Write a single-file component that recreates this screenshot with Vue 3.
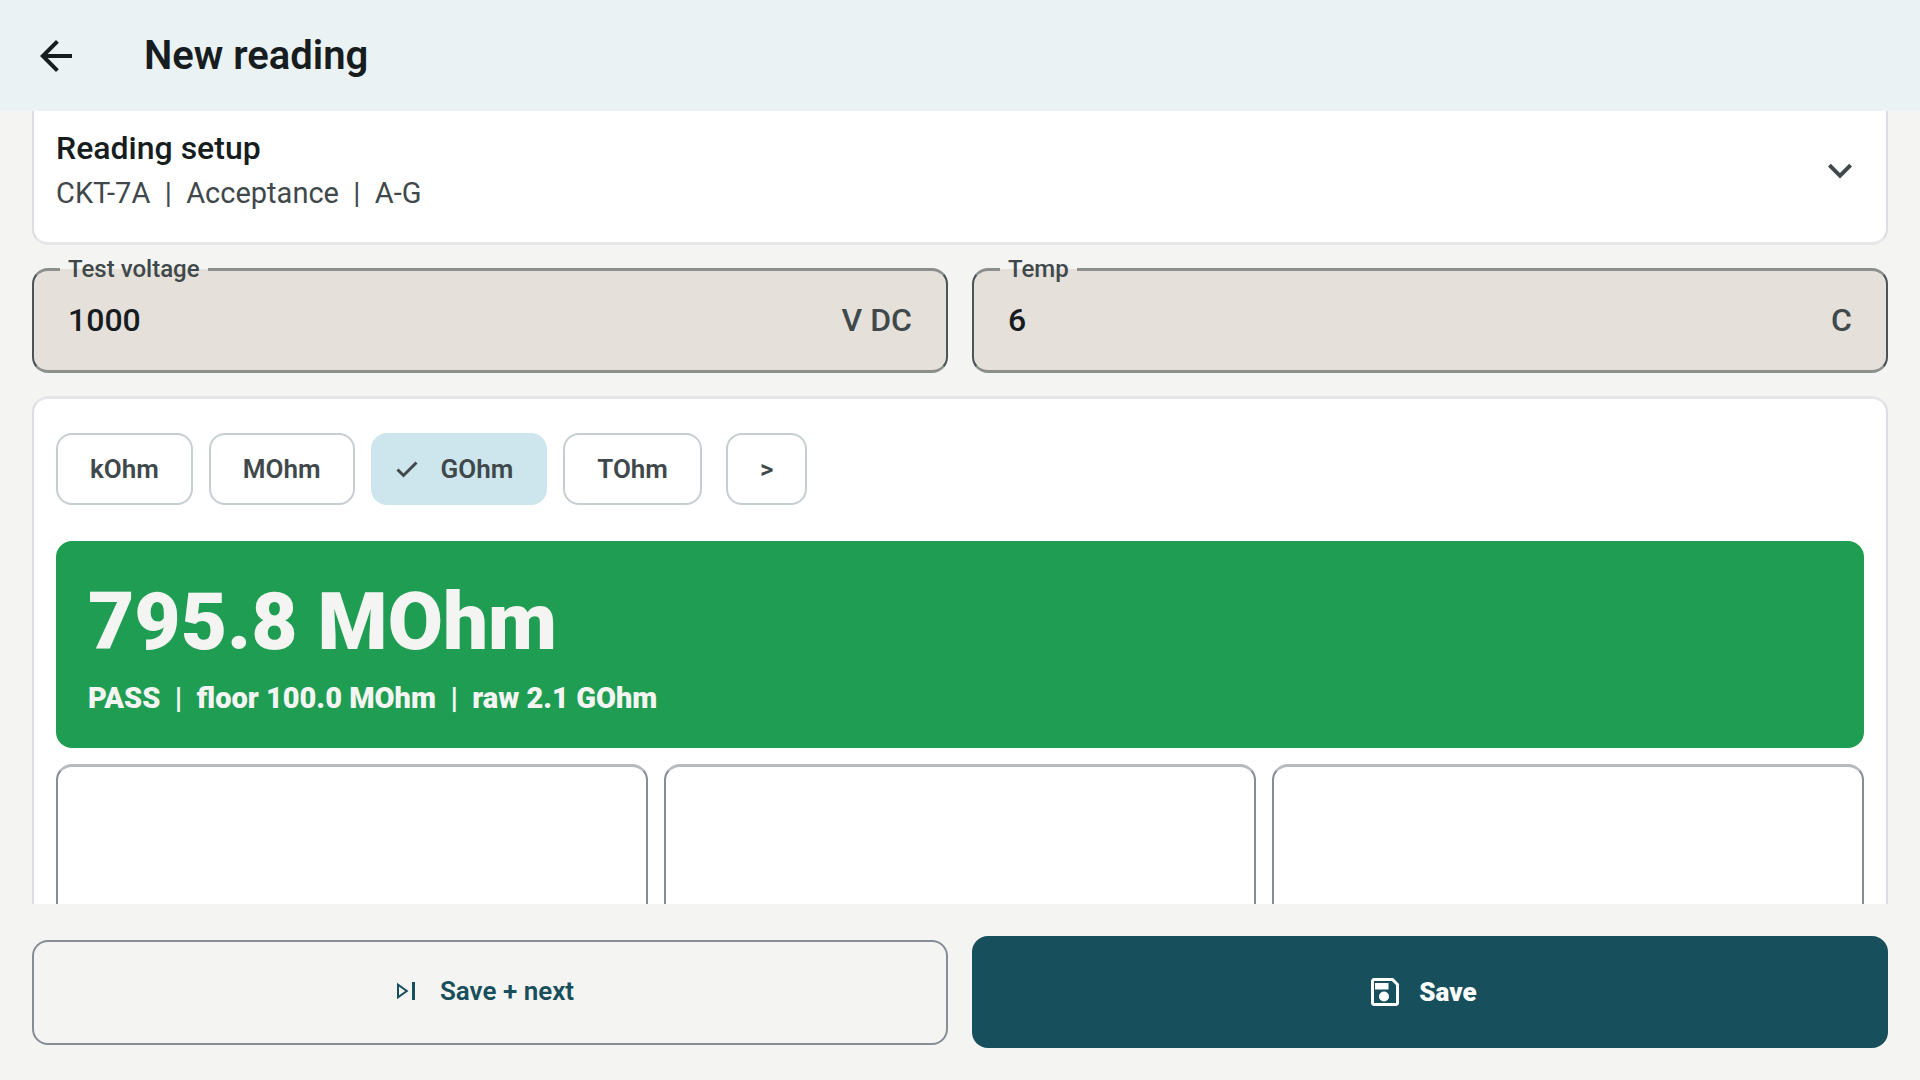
<script setup>
import { ref } from 'vue'

const voltage = ref('1000')
const temperature = ref('6')
const units = ['kOhm', 'MOhm', 'GOhm', 'TOhm']
const selectedUnit = ref('GOhm')
const keys = ['7', '8', '9']
</script>

<template>
  <div class="screen">
    <header class="app-bar">
      <button class="back" type="button" aria-label="Back">
        <svg class="icon" viewBox="0 0 24 24" aria-hidden="true">
          <path d="M20 11H7.83l5.59-5.59L12 4l-8 8 8 8 1.41-1.41L7.83 13H20z" />
        </svg>
      </button>
      <h1>New reading</h1>
    </header>

    <main class="content">
      <button class="setup" type="button" aria-expanded="false">
        <span class="setup-text">
          <span class="setup-title">Reading setup</span>
          <span class="setup-detail">CKT-7A &nbsp;|&nbsp; Acceptance &nbsp;|&nbsp; A-G</span>
        </span>
        <svg class="icon" viewBox="0 0 24 24" aria-hidden="true">
          <path d="M16.59 8.89 12 13.47 7.41 8.89 6 10.300l6 6 6-6z" />
        </svg>
      </button>

      <div class="fields">
        <div class="field">
          <label for="voltage">Test voltage</label>
          <input id="voltage" v-model="voltage" type="text" inputmode="numeric" />
          <span class="suffix">V DC</span>
        </div>
        <div class="field">
          <label for="temperature">Temp</label>
          <input id="temperature" v-model="temperature" type="text" inputmode="numeric" />
          <span class="suffix">C</span>
        </div>
      </div>

      <section class="entry">
        <div class="chips">
          <button
            v-for="unit in units"
            :key="unit"
            type="button"
            class="chip"
            :class="{ selected: unit === selectedUnit }"
            :aria-pressed="unit === selectedUnit"
            @click="selectedUnit = unit"
          >
            <svg v-if="unit === selectedUnit" class="check" viewBox="0 0 24 24" aria-hidden="true">
              <path d="m2.500 12.500 6 6L21.500 5.500" />
            </svg>
            {{ unit }}
          </button>
          <button type="button" class="chip more">&gt;</button>
        </div>

        <div class="result">
          <strong class="result-value">795.8 MOhm</strong>
          <span class="result-detail">PASS &nbsp;|&nbsp; floor 100.0 MOhm &nbsp;|&nbsp; raw 2.1 GOhm</span>
        </div>

        <div class="keypad">
          <button v-for="key in keys" :key="key" class="key" type="button" :aria-label="key"></button>
        </div>
      </section>
    </main>

    <footer class="actions">
      <button class="action outlined" type="button">
        <svg class="next-icon" viewBox="0 0 20 20" aria-hidden="true">
          <path class="triangle" d="M2 3.800v12.400L10.800 10z" />
          <path d="M17.500 1v18" />
        </svg>
        Save + next
      </button>
      <button class="action filled" type="button">
        <svg class="save-icon" viewBox="0 0 28 28" aria-hidden="true">
          <path d="M3 1.500h18.500l5 5V25a1.500 1.500 0 0 1-1.500 1.500H3A1.500 1.500 0 0 1 1.500 25V3A1.500 1.500 0 0 1 3 1.500z" />
          <rect x="4" y="5" width="13.500" height="6.500" />
          <circle cx="13" cy="18.500" r="5" />
        </svg>
        Save
      </button>
    </footer>
  </div>
</template>

<style>
body {
  margin: 0;
  background: #f4f4f2;
}
</style>

<style scoped>
.screen {
  display: flex;
  flex-direction: column;
  height: 100vh;
  background: #f4f4f2;
  color: #171c1f;
  font-family: Roboto, sans-serif;
}

.screen *,
.screen {
  box-sizing: border-box;
}

button,
input {
  margin: 0;
  font-family: inherit;
  color: inherit;
}

button {
  cursor: pointer;
}

.icon {
  display: block;
  flex: none;
  width: 48px;
  height: 48px;
  fill: currentColor;
}

.app-bar {
  display: flex;
  flex: none;
  align-items: center;
  gap: 64px;
  height: 111px;
  padding: 0 32px;
  background: #eaf2f4;
}

.back {
  padding: 0;
  border: 0;
  background: none;
}

h1 {
  margin: 0;
  font-size: 40px;
  font-weight: 600;
  line-height: 48px;
}

.content {
  display: flex;
  flex: 1;
  flex-direction: column;
  gap: 23px;
  min-height: 0;
  padding: 0 32px;
  overflow: hidden;
}

.setup {
  display: flex;
  flex: none;
  align-items: center;
  justify-content: space-between;
  padding: 14px 22px 27px;
  border: 2px solid #dcdee2;
  border-top: 0;
  border-bottom: 3px solid #e4e6e8;
  border-radius: 0 0 16px 16px;
  background: #fff;
  text-align: left;
}

.setup-text {
  display: flex;
  flex-direction: column;
}

.setup-title {
  font-size: 32px;
  font-weight: 500;
  line-height: 46px;
}

.setup-detail {
  font-size: 29px;
  line-height: 44px;
  color: #3f484b;
}

.setup .icon {
  color: #3f484b;
}

.fields,
.actions {
  display: grid;
  flex: none;
  grid-template-columns: 1fr 1fr;
  gap: 24px;
}

.field {
  position: relative;
  display: flex;
  align-items: center;
  height: 105px;
  padding: 0 34px 2px;
  border: 2px solid #4b5456;
  border-top: 3px solid #8b908d;
  border-bottom: 3px solid #8b908d;
  border-radius: 16px;
  background: #e5e0d9;
  font-size: 32px;
}

.field label {
  position: absolute;
  top: -18px;
  left: 26px;
  padding: 0 8px;
  background: linear-gradient(#f4f4f2 50%, #e5e0d9 50%);
  font-size: 24px;
  font-weight: 500;
  line-height: 32px;
  color: #3f484b;
}

.field input {
  flex: 1;
  min-width: 0;
  padding: 0;
  border: 0;
  outline: 0;
  background: none;
  font-size: 32px;
  font-weight: 500;
}

.suffix {
  font-weight: 500;
  color: #3f484b;
}

.entry {
  flex: none;
  padding: 34px 22px 24px;
  border: 2px solid #dcdee2;
  border-top: 3px solid #e4e6e8;
  border-radius: 16px;
  background: #fff;
}

.chips {
  display: flex;
  gap: 16px;
  margin-bottom: 36px;
}

.chip {
  display: flex;
  align-items: center;
  height: 72px;
  padding: 0 32px;
  border: 2px solid #c6ced1;
  border-radius: 16px;
  background: #fff;
  font-size: 26px;
  font-weight: 600;
  color: #3f484b;
}

.chip.selected {
  gap: 22px;
  padding: 0 32px 0 22px;
  border-color: #cde6ed;
  background: #cde6ed;
}

.chip.more {
  margin-left: 8px;
}

.check {
  width: 24px;
  height: 24px;
  fill: none;
  stroke: currentColor;
  stroke-width: 3;
}

.result {
  display: flex;
  flex-direction: column;
  gap: 4px;
  padding: 33px 32px 26px;
  border-radius: 16px;
  background: #1f9e53;
  color: #f4f4f2;
}

.result-value {
  font-size: 80px;
  font-weight: 900;
  line-height: 96px;
}

.result-detail {
  font-size: 29px;
  font-weight: 900;
  line-height: 48px;
}

.keypad {
  display: grid;
  grid-template-columns: repeat(3, 1fr);
  gap: 16px;
  margin-top: 16px;
}

.key {
  height: 168px;
  border: 2px solid #868d94;
  border-top: 3px solid #b5babe;
  border-radius: 16px;
  background: #fff;
}

.actions {
  align-items: center;
  padding: 32px;
}

.action {
  display: flex;
  align-items: center;
  justify-content: center;
  border-radius: 16px;
  font-size: 26px;
}

.outlined {
  gap: 24px;
  height: 105px;
  padding: 0 16px 2px 6px;
  border: 2px solid #868d94;
  background: none;
  font-weight: 600;
  color: #174f5c;
}

.filled {
  gap: 20px;
  height: 112px;
  padding: 0 18px 0 6px;
  border: 0;
  background: #174f5c;
  font-weight: 900;
  color: #fff;
}

.next-icon {
  width: 20px;
  height: 20px;
  fill: none;
  stroke: currentColor;
  stroke-width: 3;
}

.next-icon .triangle {
  stroke-width: 2;
}

.save-icon {
  width: 28px;
  height: 28px;
  fill: none;
  stroke: currentColor;
  stroke-width: 3;
}

.save-icon rect,
.save-icon circle {
  fill: currentColor;
  stroke: none;
}
</style>
